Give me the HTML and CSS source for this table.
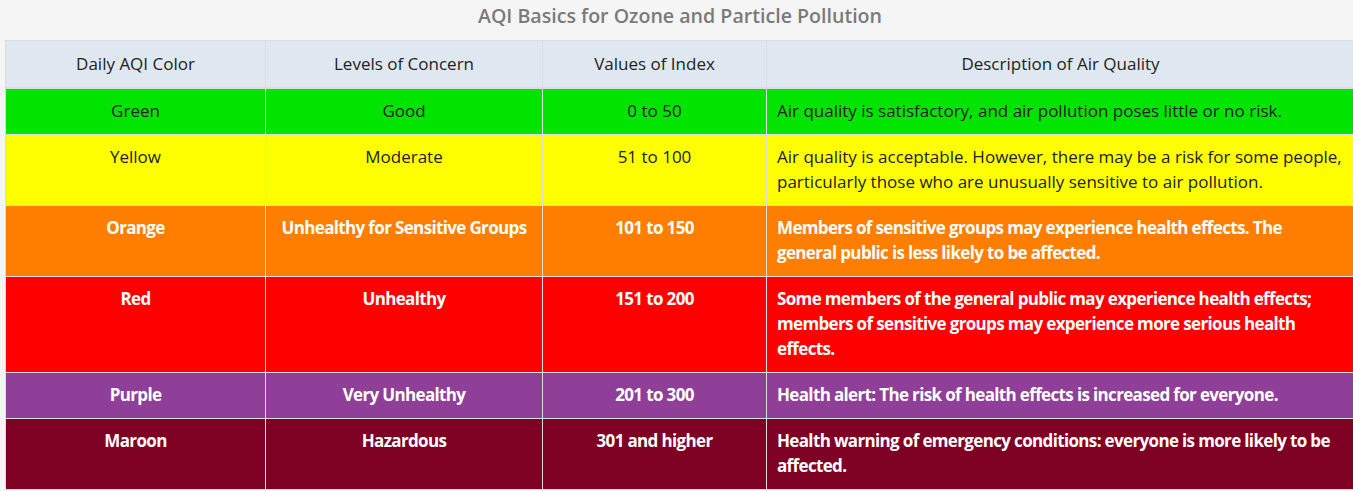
FILE: index.html
```html
<!DOCTYPE html>
<html lang="en">
<head>
<meta charset="utf-8">
<title>AQI Basics for Ozone and Particle Pollution</title>
<link rel="stylesheet" href="styles.css">
</head>
<body>
<div class="wrap">
  <table class="aqi">
    <caption>AQI Basics for Ozone and Particle Pollution</caption>
    <colgroup>
      <col class="c1"><col class="c2"><col class="c3"><col class="c4">
    </colgroup>
    <thead>
      <tr>
        <th>Daily AQI Color</th>
        <th>Levels of Concern</th>
        <th>Values of Index</th>
        <th>Description of Air Quality</th>
      </tr>
    </thead>
    <tbody>
      <tr class="green">
        <td>Green</td><td>Good</td><td>0 to 50</td>
        <td class="desc">Air quality is satisfactory, and air pollution poses little or no risk.</td>
      </tr>
      <tr class="yellow">
        <td>Yellow</td><td>Moderate</td><td>51 to 100</td>
        <td class="desc">Air quality is acceptable. However, there may be a risk for some people, particularly those who are unusually sensitive to air pollution.</td>
      </tr>
      <tr class="orange">
        <td>Orange</td><td>Unhealthy for Sensitive Groups</td><td>101 to 150</td>
        <td class="desc">Members of sensitive groups may experience health effects. The general public is less likely to be affected.</td>
      </tr>
      <tr class="red">
        <td>Red</td><td>Unhealthy</td><td>151 to 200</td>
        <td class="desc">Some members of the general public may experience health effects; members of sensitive groups may experience more serious health effects.</td>
      </tr>
      <tr class="purple">
        <td>Purple</td><td>Very Unhealthy</td><td>201 to 300</td>
        <td class="desc">Health alert: The risk of health effects is increased for everyone.</td>
      </tr>
      <tr class="maroon">
        <td>Maroon</td><td>Hazardous</td><td>301 and higher</td>
        <td class="desc">Health warning of emergency conditions: everyone is more likely to be affected.</td>
      </tr>
    </tbody>
  </table>
</div>
</body>
</html>
```
FILE: styles.css
```css
html, body {
  margin: 0;
  padding: 0;
  background: #f5f5f5;
  overflow: hidden;
}
body {
  font-family: "Open Sans", "Noto Sans", sans-serif;
  font-size: 17px;
  color: #333;
}
.wrap {
  padding: 0 0 0 5px;
}
.aqi {
  width: 1350px;
  border-collapse: collapse;
  table-layout: fixed;
  border: 1px solid #ddd;
}
.aqi caption {
  font-size: 19.6px;
  font-weight: 600;
  color: #7a7a7a;
  line-height: 24px;
  padding: 4px 0 12px;
  text-align: center;
}
.c1 { width: 260px; }
.c2 { width: 277px; }
.c3 { width: 224px; }
.c4 { width: auto; }
.aqi th {
  background: #dfe8f1;
  font-weight: 400;
  color: #222;
  padding: 11px 10px;
  line-height: 24px;
  text-align: center;
  vertical-align: top;
  border: 1px solid #ddd;
  border-bottom-width: 2px;
}
.aqi td {
  padding: 9px 10px 11px;
  line-height: 25px;
  text-align: center;
  vertical-align: top;
  border: 1px solid #ddd;
  font-weight: 700;
  letter-spacing: -0.65px;
  color: #fff;
}
.aqi td.desc { text-align: left; }
.green td, .yellow td {
  color: #222;
  font-weight: 400;
  letter-spacing: 0;
}
.green td { background: #00e400; }
.yellow td { background: #ffff00; }
.orange td { background: #ff7e00; }
.red td { background: #ff0000; }
.purple td { background: #8f3f97; }
.maroon td { background: #7e0023; }
```
